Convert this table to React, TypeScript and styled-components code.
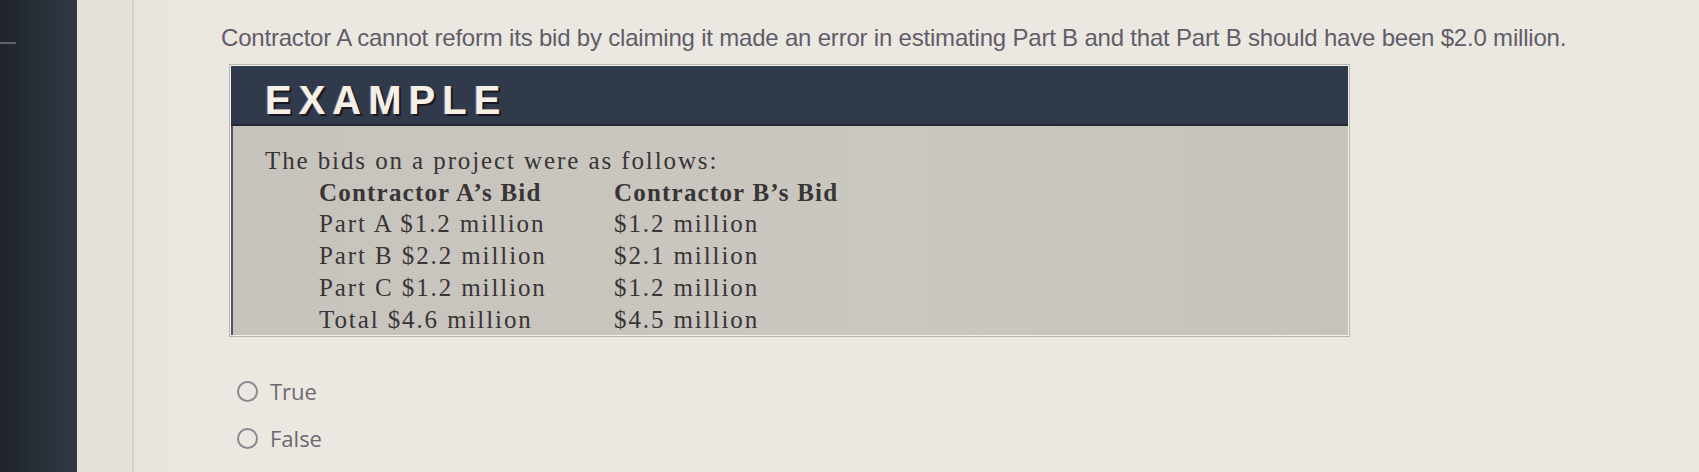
import * as React from 'react';
import styled, { createGlobalStyle } from 'styled-components';

const GlobalStyle = createGlobalStyle`
	html, body {
		margin: 0;
		padding: 0;
		background: #e9e6e0;
	}
`;

const Screen = styled.div`
	display: flex;
	height: 472px;
	overflow: hidden;
	background: #ebe8e2;
`;

const Bezel = styled.div`
	position: relative;
	width: 77px;
	flex-shrink: 0;
	background: linear-gradient(90deg, #1f242b 0%, #2a3039 55%, #323842 100%);
`;

const BezelMark = styled.span`
	position: absolute;
	left: 0;
	top: 42px;
	width: 16px;
	height: 2px;
	background: #5c6068;
`;

const SideStrip = styled.div`
	width: 55px;
	flex-shrink: 0;
	background: #e4e1db;
	border-right: 2px solid #d6d2cb;
`;

const SideShade = styled.div`
	width: 34px;
	flex-shrink: 0;
	background: #e7e4de;
`;

const Main = styled.main`
	flex: 1;
	padding: 26px 0 0 53px;
`;

const Question = styled.p`
	margin: 0;
	font-family: 'Liberation Sans', Arial, sans-serif;
	font-size: 24px;
	line-height: 24px;
	color: #625c68;
	letter-spacing: -0.2px;
	white-space: nowrap;
`;

const ExampleBox = styled.section`
	margin: 15px 0 0 9px;
	width: 1117px;
	border: 1px solid #f3f1ed;
	box-shadow: 0 0 0 1px #b9b6b0;
`;

const ExampleHeader = styled.header`
	height: 60px;
	box-sizing: border-box;
	display: flex;
	align-items: center;
	padding: 11px 0 0 34px;
	background: #303a4a;
	border-bottom: 2px solid #25282e;
`;

const ExampleTitle = styled.h2`
	margin: 0;
	font-family: 'Liberation Sans', Arial, sans-serif;
	font-weight: 700;
	font-size: 40px;
	letter-spacing: 7px;
	color: #f4f0e6;
	text-shadow: 2px 2px 0 #1b1820, -1px 0 0 #7d6f86;
`;

const ExampleBody = styled.div`
	padding: 19px 0 0 32px;
	background: linear-gradient(90deg, #c6c4bc 0%, #c9c7bf 60%, #c5c3bb 100%);
	border-left: 2px solid #5d4f66;
	font-family: 'Liberation Serif', 'Times New Roman', serif;
	font-size: 25px;
	line-height: 31.7px;
	letter-spacing: 1.9px;
	color: #393435;
`;

const Intro = styled.div``;

const BidTable = styled.div`
	display: grid;
	grid-template-columns: 295px auto;
	margin-left: 54px;
`;

const Cell = styled.div<{ $bold?: boolean }>`
	font-weight: ${(p) => (p.$bold ? 700 : 400)};
	letter-spacing: ${(p) => (p.$bold ? '1.2px' : '1.9px')};
	white-space: nowrap;
`;

const Choices = styled.div`
	display: flex;
	flex-direction: column;
	gap: 23px;
	margin: 43px 0 0 16px;
`;

const Choice = styled.label`
	display: flex;
	align-items: center;
	gap: 12px;
	font-family: 'Open Sans', 'Noto Sans', sans-serif;
	font-size: 22px;
	line-height: 24px;
	color: #6d6772;
`;

const Radio = styled.span`
	width: 17px;
	height: 17px;
	border: 2px solid #8d8890;
	border-radius: 50%;
	flex-shrink: 0;
`;

const rows: [string, string][] = [
	['Part A $1.2 million', '$1.2 million'],
	['Part B $2.2 million', '$2.1 million'],
	['Part C $1.2 million', '$1.2 million'],
	['Total $4.6 million', '$4.5 million'],
];

export default function App() {
	return (
		<>
			<GlobalStyle />
			<Screen>
				<Bezel>
					<BezelMark />
				</Bezel>
				<SideStrip />
				<SideShade />
				<Main>
					<Question>
						Contractor A cannot reform its bid by claiming it made an error in estimating Part B and that Part B should have been $2.0 million.
					</Question>
					<ExampleBox>
						<ExampleHeader>
							<ExampleTitle>EXAMPLE</ExampleTitle>
						</ExampleHeader>
						<ExampleBody>
							<Intro>The bids on a project were as follows:</Intro>
							<BidTable>
								<Cell $bold>Contractor A’s Bid</Cell>
								<Cell $bold>Contractor B’s Bid</Cell>
								{rows.map(([a, b]) => (
									<React.Fragment key={a}>
										<Cell>{a}</Cell>
										<Cell>{b}</Cell>
									</React.Fragment>
								))}
							</BidTable>
						</ExampleBody>
					</ExampleBox>
					<Choices>
						<Choice>
							<Radio />
							True
						</Choice>
						<Choice>
							<Radio />
							False
						</Choice>
					</Choices>
				</Main>
			</Screen>
		</>
	);
}
